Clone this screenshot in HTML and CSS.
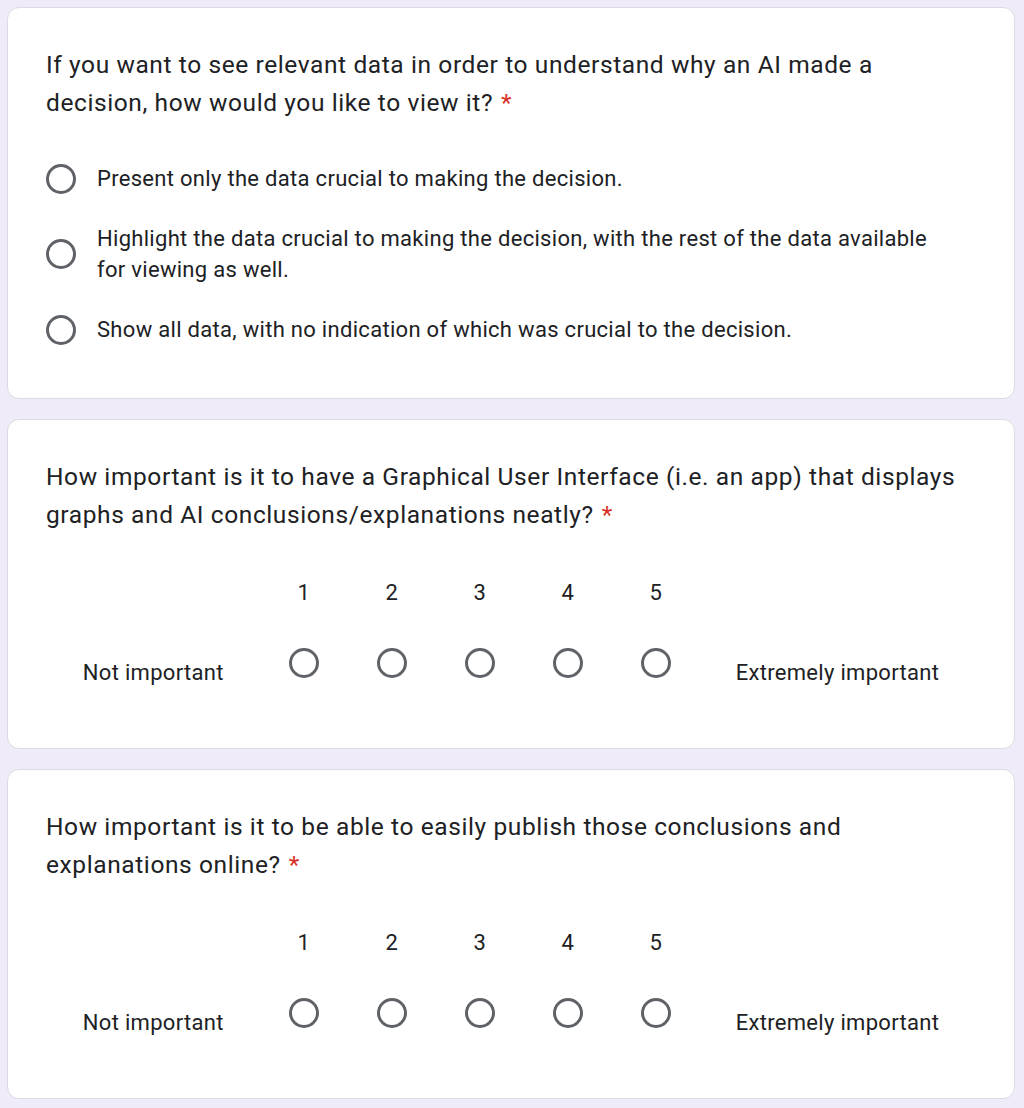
FILE: index.html
```html
<!DOCTYPE html>
<html lang="en">
<head>
<meta charset="utf-8">
<title>Form</title>
<link rel="stylesheet" href="styles.css">
</head>
<body>
<main class="form">
  <section class="card card-choice">
    <div class="title">If you want to see relevant data in order to understand why an AI made a decision, how would you like to view it?<span class="req">*</span></div>
    <div class="options">
      <div class="option"><span class="radio"></span><span class="opt-text">Present only the data crucial to making the decision.</span></div>
      <div class="option"><span class="radio"></span><span class="opt-text">Highlight the data crucial to making the decision, with the rest of the data available for viewing as well.</span></div>
      <div class="option"><span class="radio"></span><span class="opt-text">Show all data, with no indication of which was crucial to the decision.</span></div>
    </div>
  </section>

  <section class="card card-scale">
    <div class="title">How important is it to have a Graphical User Interface (i.e. an app) that displays graphs and AI conclusions/explanations neatly?<span class="req">*</span></div>
    <div class="scale">
      <div class="scale-label">Not important</div>
      <div class="scale-col"><div class="num">1</div><div class="cell"><span class="radio"></span></div></div>
      <div class="scale-col"><div class="num">2</div><div class="cell"><span class="radio"></span></div></div>
      <div class="scale-col"><div class="num">3</div><div class="cell"><span class="radio"></span></div></div>
      <div class="scale-col"><div class="num">4</div><div class="cell"><span class="radio"></span></div></div>
      <div class="scale-col"><div class="num">5</div><div class="cell"><span class="radio"></span></div></div>
      <div class="scale-label">Extremely important</div>
    </div>
  </section>

  <section class="card card-scale">
    <div class="title">How important is it to be able to easily publish those conclusions and explanations online?<span class="req">*</span></div>
    <div class="scale">
      <div class="scale-label">Not important</div>
      <div class="scale-col"><div class="num">1</div><div class="cell"><span class="radio"></span></div></div>
      <div class="scale-col"><div class="num">2</div><div class="cell"><span class="radio"></span></div></div>
      <div class="scale-col"><div class="num">3</div><div class="cell"><span class="radio"></span></div></div>
      <div class="scale-col"><div class="num">4</div><div class="cell"><span class="radio"></span></div></div>
      <div class="scale-col"><div class="num">5</div><div class="cell"><span class="radio"></span></div></div>
      <div class="scale-label">Extremely important</div>
    </div>
  </section>
</main>
</body>
</html>
```
FILE: styles.css
```css
html, body {
  margin: 0;
  padding: 0;
  background: #f0ebf8;
}
body {
  font-family: Roboto, "Liberation Sans", Arial, sans-serif;
  color: #202124;
}
.form {
  margin: 7px 9px 0 7px;
  display: flex;
  flex-direction: column;
  gap: 20px;
  padding-bottom: 8px;
}
.card {
  background: #fff;
  border: 1px solid #dadce0;
  border-radius: 12px;
  padding: 38px 38px 0 38px;
}
.card-choice { padding-bottom: 53px; }
.card-scale { padding-bottom: 60px; }
.title {
  font-family: Roboto, "Liberation Sans", sans-serif;
  font-size: 24.5px;
  line-height: 38px;
  letter-spacing: 0.6px;
}
.req {
  color: #d93025;
  margin-left: 8px;
}
.options {
  margin-top: 41px;
  display: flex;
  flex-direction: column;
  gap: 29px;
}
.option {
  display: flex;
  align-items: center;
}
.radio {
  display: block;
  flex: none;
  width: 30px;
  height: 30px;
  box-sizing: border-box;
  border: 3px solid #5f6368;
  border-radius: 50%;
}
.opt-text {
  margin-left: 21px;
  font-size: 22px;
  line-height: 31px;
  letter-spacing: 0.3px;
  max-width: 860px;
}
.scale {
  margin-top: 44px;
  display: flex;
  justify-content: center;
  align-items: flex-end;
}
.scale-label {
  padding: 0 36px;
  font-size: 22px;
  line-height: 30px;
  letter-spacing: 0.3px;
}
.scale-col {
  width: 88px;
  display: flex;
  flex-direction: column;
  align-items: center;
}
.num {
  font-size: 22px;
  line-height: 30px;
  margin-bottom: 30px;
}
.cell {
  height: 50px;
  display: flex;
  align-items: center;
  justify-content: center;
}
```
